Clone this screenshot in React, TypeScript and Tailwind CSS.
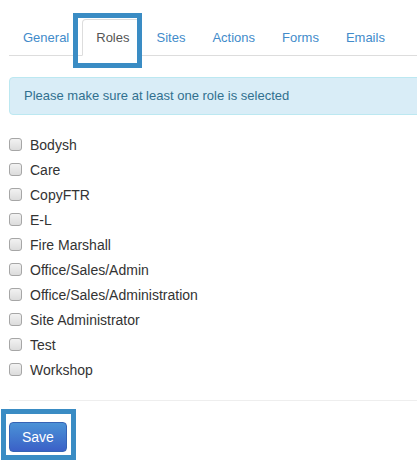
import React from "react";

const roles = [
  "Bodysh",
  "Care",
  "CopyFTR",
  "E-L",
  "Fire Marshall",
  "Office/Sales/Admin",
  "Office/Sales/Administration",
  "Site Administrator",
  "Test",
  "Workshop",
];

const tabs = ["General", "Roles", "Sites", "Actions", "Forms", "Emails"];

export default function App() {
  return (
    <div
      className="relative w-[417px] h-[475px] overflow-hidden bg-white"
      style={{ fontFamily: '"Liberation Sans", Arial, sans-serif' }}
    >
      <div className="w-[460px] pl-[9px]">
        <ul className="mt-[19px] flex border-b border-[#dddddd]">
          {tabs.map((t) => {
            const active = t === "Roles";
            return (
              <li key={t} className="-mb-px mr-[1px]">
                <a
                  className={
                    active
                      ? "block rounded-t-[4px] border border-[#dddddd] border-b-transparent bg-white pl-[13px] pr-[11px] py-[9px] text-[13px] leading-[17px] text-[#555555]"
                      : "block rounded-t-[4px] border border-transparent pl-[13px] pr-[11px] py-[9px] text-[13px] leading-[17px] text-[#428bca]"
                  }
                >
                  {t}
                </a>
              </li>
            );
          })}
        </ul>

        <div className="mt-[21px] rounded-[4px] border border-[#bce8f1] bg-[#d9edf7] px-[14px] py-[9px] text-[13px] leading-[18px] text-[#31708f]">
          Please make sure at least one role is selected
        </div>

        <div className="mt-[17px] flex flex-col">
          {roles.map((r) => (
            <label key={r} className="flex h-[25px] items-center text-[14px] text-[#333333]">
              <span className="inline-block h-[13px] w-[13px] rounded-[3px] border border-[#a6a6a6] bg-gradient-to-b from-[#f2f2f2] to-[#dcdcdc]" />
              <span className="ml-[8px] leading-[20px]">{r}</span>
            </label>
          ))}
        </div>

        <hr className="mt-[18px] border-0 border-t border-[#eeeeee]" />

        <div className="mt-[21px]">
          <button className="h-[30px] rounded-[4px] border border-[#3563b5] bg-gradient-to-b from-[#4b92d6] to-[#3b60c7] px-[12px] text-[14px] leading-[18px] text-white">
            Save
          </button>
        </div>
      </div>

      <div className="pointer-events-none absolute left-[73px] top-[13px] h-[55px] w-[69px] border-[5px] border-[#3a8cc4]" />
      <div className="pointer-events-none absolute left-[1px] top-[409px] h-[51px] w-[75px] border-[5px] border-[#3a8cc4]" />
    </div>
  );
}
